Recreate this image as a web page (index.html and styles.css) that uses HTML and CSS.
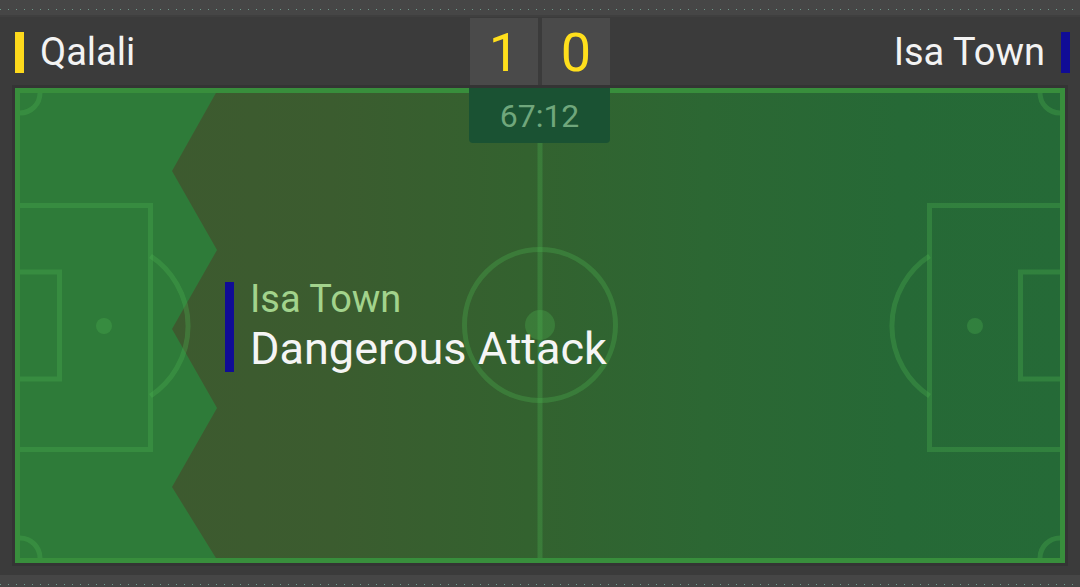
FILE: index.html
```html
<!DOCTYPE html>
<html lang="en">
<head>
<meta charset="utf-8">
<title>Match tracker</title>
<link rel="stylesheet" href="styles.css">
</head>
<body>
<div class="strip strip-top"><span class="dots"></span></div>
<main class="widget">
  <header class="scorebar">
    <div class="team team-home">
      <span class="team-bar bar-yellow"></span>
      <span class="team-name">Qalali</span>
    </div>
    <div class="scores">
      <span class="score">1</span>
      <span class="score">0</span>
    </div>
    <div class="team team-away">
      <span class="team-name">Isa Town</span>
      <span class="team-bar bar-blue"></span>
    </div>
  </header>
  <section class="pitch">
    <svg class="markings" viewBox="0 0 1040 465" width="1040" height="465">
      <defs>
        <linearGradient id="attack" gradientUnits="userSpaceOnUse" x1="152" y1="0" x2="1040" y2="0">
          <stop offset="0" stop-color="#3d5a2f"/>
          <stop offset="0.18" stop-color="#3b5c2f"/>
          <stop offset="0.4" stop-color="#33622f"/>
          <stop offset="0.6" stop-color="#2c6733"/>
          <stop offset="0.82" stop-color="#266936"/>
          <stop offset="1" stop-color="#256a37"/>
        </linearGradient>
      </defs>
      <rect width="1040" height="465" fill="#2e7b39"/>
      <polygon points="197,-2 152,78 197,157 152,236 197,315 152,394 199,470 1040,470 1040,-2" fill="url(#attack)"/>
      <g fill="none" stroke="#4caf50" stroke-opacity="0.33" stroke-width="5">
        <line x1="520" y1="0" x2="520" y2="465"/>
        <circle cx="520" cy="232" r="75.5"/>
        <path d="M0 112.5H130.5V356.5H0"/>
        <path d="M0 179H39.5V286H0"/>
        <path d="M130.5 163A84 84 0 0 1 130.5 303"/>
        <path d="M1040 112.5H909.5V356.5H1040"/>
        <path d="M1040 179H1000.5V286H1040"/>
        <path d="M909.5 163A84 84 0 0 0 909.5 303"/>
        <path d="M0 20A20 20 0 0 0 20 0"/>
        <path d="M0 445A20 20 0 0 1 20 465"/>
        <path d="M1020 0A20 20 0 0 0 1040 20"/>
        <path d="M1040 445A20 20 0 0 0 1020 465"/>
      </g>
      <g fill="#4caf50" fill-opacity="0.33">
        <circle cx="520" cy="232" r="15"/>
        <circle cx="84" cy="233" r="8"/>
        <circle cx="955" cy="233" r="8"/>
      </g>
    </svg>
    <div class="timer">67:12</div>
    <div class="event">
      <span class="event-bar"></span>
      <div class="event-text">
        <div class="event-team">Isa Town</div>
        <div class="event-action">Dangerous Attack</div>
      </div>
    </div>
  </section>
</main>
<div class="strip strip-bottom"><span class="dots"></span></div>
</body>
</html>
```
FILE: styles.css
```css
html, body {
  margin: 0;
  padding: 0;
}
body {
  width: 1080px;
  height: 587px;
  overflow: hidden;
  background: #3b3b3b;
  font-family: Roboto, "Liberation Sans", sans-serif;
  color: #f3f3f3;
}

.strip {
  display: block;
  box-sizing: border-box;
  padding-top: 9px;
  background: #464646;
}
.strip-top {
  height: 17px;
  border-bottom: 2px solid #3f3f3f;
}
.strip-bottom {
  height: 12px;
}
.dots {
  display: block;
  height: 1px;
  background: repeating-linear-gradient(90deg, #6f9a8c 0 1px, transparent 1px 8px);
}

.widget {
  background: #3b3b3b;
  padding: 0 15px 12px;
}

.scorebar {
  height: 71px;
  display: flex;
  align-items: center;
}
.team {
  flex: 1;
  display: flex;
  align-items: center;
  gap: 16px;
}
.team-away {
  justify-content: flex-end;
}
.team-bar {
  display: block;
  flex: none;
  width: 9px;
  height: 41px;
}
.bar-yellow { background: #fdd91c; }
.bar-blue {
  background: #100c96;
  margin-right: -5px;
}
.team-name {
  font-size: 38px;
  line-height: 38px;
  position: relative;
  top: -1px;
}

.scores {
  align-self: flex-end;
  display: flex;
  gap: 4px;
}
.score {
  width: 68px;
  height: 70px;
  display: flex;
  align-items: center;
  justify-content: center;
  background: #4a4a4a;
  color: #ffdf1c;
  font-size: 54px;
  line-height: 1;
}

.pitch {
  position: relative;
  box-sizing: border-box;
  width: 1050px;
  height: 475px;
  border: 5px solid #388e3c;
  box-shadow: 0 0 0 3px #343434;
}
.markings {
  display: block;
}

.timer {
  position: absolute;
  top: -5px;
  left: 449px;
  width: 141px;
  height: 55px;
  display: flex;
  align-items: center;
  justify-content: center;
  background: #1a5233;
  color: #70a77c;
  font-size: 32px;
  border-radius: 0 0 4px 4px;
}

.event {
  position: absolute;
  left: 205px;
  top: 186px;
  display: flex;
  align-items: flex-end;
  gap: 16px;
}
.event-bar {
  display: block;
  width: 9px;
  height: 90px;
  background: #100c96;
}
.event-team {
  font-size: 38px;
  line-height: 40px;
  color: #a2d38c;
}
.event-action {
  margin-top: 7px;
  font-size: 45px;
  line-height: 46px;
  color: #f5f5f5;
}
```
